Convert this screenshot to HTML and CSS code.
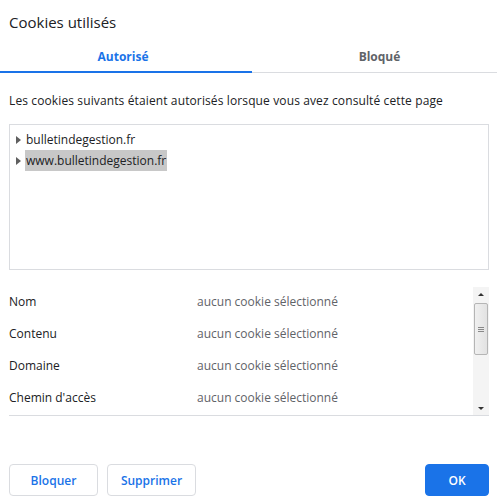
FILE: index.html
```html
<!DOCTYPE html>
<html lang="fr">
<head>
<meta charset="utf-8">
<title>Cookies utilisés</title>
<link rel="stylesheet" href="styles.css">
</head>
<body>
<div class="dialog">
  <h1 class="title">Cookies utilisés</h1>
  <div class="tabs">
    <div class="tab active">Autorisé</div>
    <div class="tab">Bloqué</div>
  </div>
  <p class="desc">Les cookies suivants étaient autorisés lorsque vous avez consulté cette page</p>
  <div class="tree">
    <div class="node"><span class="tri"></span><span class="label">bulletindegestion.fr</span></div>
    <div class="node"><span class="tri"></span><span class="label selected">www.bulletindegestion.fr</span></div>
  </div>
  <div class="details">
    <div class="rows">
      <div class="row"><span class="key">Nom</span><span class="val">aucun cookie sélectionné</span></div>
      <div class="row"><span class="key">Contenu</span><span class="val">aucun cookie sélectionné</span></div>
      <div class="row"><span class="key">Domaine</span><span class="val">aucun cookie sélectionné</span></div>
      <div class="row"><span class="key">Chemin d'accès</span><span class="val">aucun cookie sélectionné</span></div>
    </div>
    <div class="scrollbar">
      <span class="arrow up"></span>
      <div class="thumb"><span class="grip"></span></div>
      <span class="arrow down"></span>
    </div>
  </div>
  <div class="buttons">
    <button class="btn">Bloquer</button>
    <button class="btn">Supprimer</button>
    <span class="spacer"></span>
    <button class="btn primary">OK</button>
  </div>
</div>
</body>
</html>
```
FILE: styles.css
```css
* { box-sizing: border-box; }
html, body { margin: 0; padding: 0; background: #fff; }
body {
  font-family: "Open Sans", "Noto Sans", sans-serif;
  font-size: 12px;
  color: #202124;
}
.dialog { width: 497px; height: 502px; display: flex; flex-direction: column; }
.title {
  margin: 0;
  font-weight: 400;
  font-size: 15px;
  line-height: 20px;
  padding: 12px 9px 0;
  height: 44px;
}
.tabs { display: flex; height: 29px; }
.tab {
  flex: 0 0 252px;
  text-align: center;
  font-weight: 700;
  color: #5f6368;
  font-size: 12px;
  line-height: 26px;
  border-bottom: 1px solid #dadce0;
}
.tab.active { color: #1a73e8; border-bottom: 2px solid #1a73e8; padding-right: 6px; }
.tab + .tab { flex: 1 1 auto; padding-left: 10px; }
.desc { margin: 0; padding: 19px 9px 0; line-height: 17px; height: 51px; letter-spacing: 0.12px; }
.tree {
  margin: 0 8px 0 9px;
  height: 146px;
  border: 1px solid #dadce0;
  padding: 4px 0 0 6px;
}
.node { display: flex; align-items: center; height: 21px; }
.tri {
  width: 0; height: 0;
  border-left: 5px solid #5f5f5f;
  border-top: 4px solid transparent;
  border-bottom: 4px solid transparent;
  margin-right: 4px;
}
.label { line-height: 21px; padding: 0 1px; }
.label.selected { background: #c8c8c8; }
.details {
  margin: 17px 8px 0 9px;
  height: 129px;
  border-bottom: 1px solid #dadce0;
  display: flex;
}
.rows { flex: 1; margin-top: -2px; }
.row { display: flex; height: 32px; align-items: center; }
.key { width: 188px; color: #202124; }
.val { color: #5f6368; }
.scrollbar {
  width: 16px;
  background: #f4f4f4;
  display: flex;
  flex-direction: column;
  align-items: center;
  padding: 0 1px;
}
.arrow { width: 0; height: 0; border-left: 3px solid transparent; border-right: 3px solid transparent; }
.arrow.up { border-bottom: 3px solid #333; margin: 6px 0 7px; }
.arrow.down { border-top: 3px solid #333; margin-top: auto; margin-bottom: 5px; }
.thumb {
  width: 14px;
  height: 52px;
  background: linear-gradient(to right, #f0f0f0, #e2e2e2);
  border: 1px solid #b5b5b5;
  border-radius: 2px;
  display: flex;
  align-items: center;
  justify-content: center;
}
.grip {
  width: 6px; height: 5px;
  border-top: 1px solid #888; border-bottom: 1px solid #888;
  background: linear-gradient(#888, #888) center / 100% 1px no-repeat;
}
.buttons { display: flex; gap: 9px; padding: 48px 8px 0 9px; }
.btn {
  font-family: inherit;
  font-size: 12px;
  font-weight: 600;
  height: 32px;
  width: 89px;
  background: #fff;
  color: #1a73e8;
  border: 1px solid #dadce0;
  border-radius: 4px;
}
.spacer { flex: 1; }
.btn.primary { width: 64px; background: #1a73e8; color: #fff; border-color: #1a73e8; }
```
